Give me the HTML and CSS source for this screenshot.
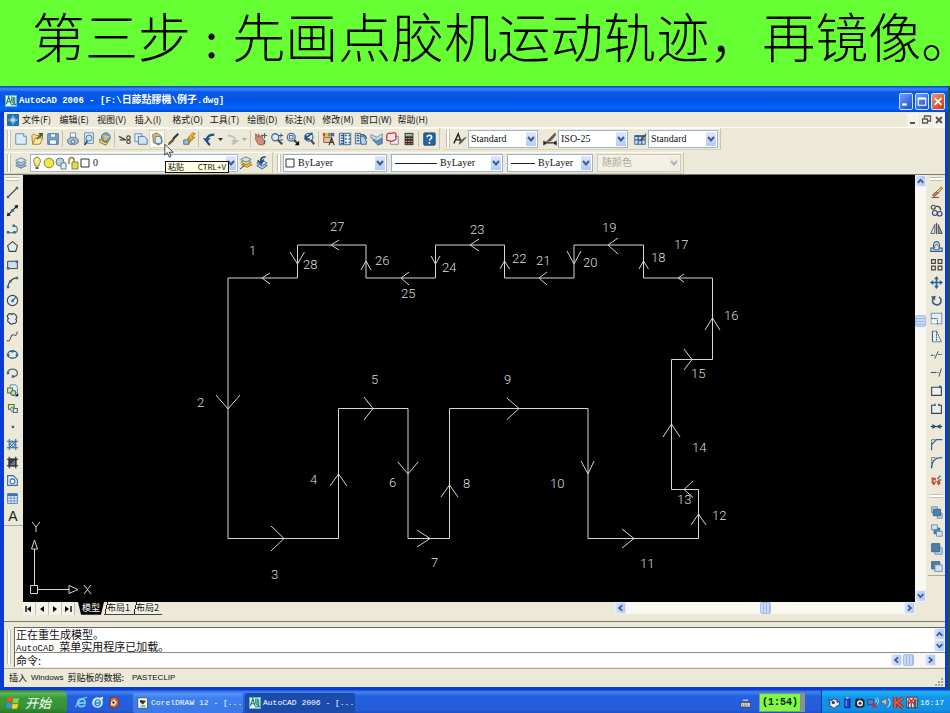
FILE: index.html
```html
<!DOCTYPE html>
<html lang="zh-CN">
<head>
<meta charset="utf-8">
<title>AutoCAD 2006</title>
<link rel="stylesheet" href="styles.css">
</head>
<body>
<svg class="defs" width="0" height="0" aria-hidden="true">
  <symbol id="chev-down" viewBox="0 0 10 10"><path d="M2 3l3 3.4L8 3" fill="none" stroke="#3f5a8c" stroke-width="2"/></symbol>
  <symbol id="chev-up" viewBox="0 0 10 10"><path d="M2 7l3-3.4L8 7" fill="none" stroke="#3f5a8c" stroke-width="2"/></symbol>
  <symbol id="chev-left" viewBox="0 0 10 10"><path d="M6.8 2L3.4 5l3.4 3" fill="none" stroke="#3f5a8c" stroke-width="2"/></symbol>
  <symbol id="chev-right" viewBox="0 0 10 10"><path d="M3.2 2l3.4 3-3.4 3" fill="none" stroke="#3f5a8c" stroke-width="2"/></symbol>
  <symbol id="acad" viewBox="0 0 16 16"><rect width="16" height="16" fill="#e9f6f4"/><path d="M.5.5h15v15H.5z" fill="none" stroke="#2f8f8a"/><path d="M2 12L5 2l3 10M3 9h4M9 2v6M11 2v7M13 3v8M9 8c0 3 5 3 5 5H8" fill="none" stroke="#0e7a72" stroke-width="1.4"/></symbol>
  <symbol id="page" viewBox="0 0 16 16"><path d="M2 2h9l3 3v9H2z" fill="#dcecf8" stroke="#5687b0"/><path d="M11 2v3h3" fill="#fff" stroke="#5687b0"/></symbol>
  <symbol id="layers" viewBox="0 0 16 16"><path d="M2 11l6-3 6 3-6 3z" fill="#9db6cc" stroke="#5c7c9c"/><path d="M2 8l6-3 6 3-6 3z" fill="#b9cde0" stroke="#5c7c9c"/><path d="M2 5l6-3 6 3-6 3z" fill="#d5e3ef" stroke="#5c7c9c"/></symbol>
</svg>

<header class="banner"><h1>第三步 : 先画点胶机运动轨迹，再镜像<span>。</span></h1></header>

<section class="window">
  <div class="titlebar">
    <svg class="ic12"><use href="#acad"/></svg>
    <h2>AutoCAD 2006 - [F:\<span>日藤點膠機</span>\<span>例子</span>.dwg]</h2>
    <button class="wbtn" aria-label="最小化"><svg viewBox="0 0 16 16"><path d="M3 12h6" stroke="#fff" stroke-width="3"/></svg></button>
    <button class="wbtn" aria-label="最大化"><svg viewBox="0 0 16 16"><path d="M3 4h10v9H3z" fill="none" stroke="#fff" stroke-width="1.5"/><path d="M3 4h10" stroke="#fff" stroke-width="3"/></svg></button>
    <button class="wbtn close" aria-label="关闭"><svg viewBox="0 0 16 16"><path d="M3.500 3.500l9 9M12.500 3.500l-9 9" stroke="#fff" stroke-width="2.200"/></svg></button>
  </div>

  <div class="client">
    <nav class="menubar">
      <svg class="ic12" viewBox="0 0 16 16"><rect width="16" height="16" rx="1" fill="#2272a8"/><path d="M8 2v12M2 8h12M5 5l6 6M11 5l-6 6" stroke="#bfe6fa" stroke-width="1.4"/></svg>
      <div class="menus">
        <button>文件(F)</button><button>编辑(E)</button><button>视图(V)</button><button>插入(I)</button><button>格式(O)</button><button>工具(T)</button><button>绘图(D)</button><button>标注(N)</button><button>修改(M)</button><button>窗口(W)</button><button>帮助(H)</button>
      </div>
      <div class="mdi">
        <button aria-label="最小化文档"><svg viewBox="0 0 12 12"><path d="M3 9h5" stroke="#555" stroke-width="2"/></svg></button>
        <button aria-label="还原文档"><svg viewBox="0 0 12 12"><path d="M4.500 4V2h6v5H8M2.500 5h5v4h-5z" fill="none" stroke="#555" stroke-width="1.300"/></svg></button>
        <button aria-label="关闭文档"><svg viewBox="0 0 12 12"><path d="M3 3l6 6M9 3L3 9" stroke="#555" stroke-width="2"/></svg></button>
      </div>
    </nav>

    <div class="row">
      <div class="toolbar">
        <i class="grip"></i>
        <button class="tb" aria-label="新建"><svg><use href="#page"/></svg></button>
        <button class="tb" aria-label="打开"><svg viewBox="0 0 16 16"><path d="M2 4l3-2 2 2h5v9H3z" fill="#f4d58a" stroke="#a97c22"/><path d="M3 14l3-7h9l-4 7z" fill="#f9e6ae" stroke="#a97c22"/><path d="M8 8l6-6M10 2h4v4" stroke="#4a4a3c" stroke-width="1.500" fill="none"/></svg></button>
        <button class="tb" aria-label="保存"><svg viewBox="0 0 16 16"><path d="M2 2h12v12H2z" fill="#7fa9cf" stroke="#3d6a96"/><path d="M5 2h6v4H5zM4 9h8v5H4z" fill="#f4f9fd" stroke="#3d6a96" stroke-width=".8"/></svg></button>
        <i class="sep"></i>
        <button class="tb" aria-label="打印"><svg viewBox="0 0 16 16"><path d="M5 7V1h6v6" fill="#fff" stroke="#6c88a5"/><path d="M2 9l3-3h6l3 3v3l-3 2H4l-2-2z" fill="#a9bccd" stroke="#48647f"/><circle cx="8" cy="11" r="2" fill="#e7eef4" stroke="#48647f"/></svg></button>
        <button class="tb" aria-label="打印预览"><svg viewBox="0 0 16 16"><path d="M3 1h10v12H3z" fill="#e6eff8" stroke="#5c83aa"/><circle cx="8" cy="7" r="3.500" fill="#c6e2f6" stroke="#456b93"/><path d="M6 10l-3 5" stroke="#334d6b" stroke-width="2"/></svg></button>
        <button class="tb" aria-label="发布"><svg viewBox="0 0 16 16"><circle cx="9" cy="6" r="5" fill="#78a7cf" stroke="#3b6791"/><path d="M6 4l4 2 3-1M7 9l3-3" stroke="#eec94e" stroke-width="2" fill="none"/><path d="M2 8l6 4 4-1-3 4-7-3z" fill="#f2d372" stroke="#8d6e20"/></svg></button>
        <i class="sep"></i>
        <button class="tb" aria-label="剪切"><svg viewBox="0 0 16 16"><path d="M1 5l8 4M2 9h7" stroke="#444" stroke-width="1.400"/><circle cx="12" cy="6.500" r="2" fill="none" stroke="#444" stroke-width="1.300"/><circle cx="12" cy="11" r="2" fill="none" stroke="#444" stroke-width="1.300"/></svg></button>
        <button class="tb" aria-label="复制"><svg viewBox="0 0 16 16"><path d="M1 2h8v9H1z" fill="#e3eff9" stroke="#5383b1"/><path d="M5 5h7l3 3v6H5z" fill="#cfe3f5" stroke="#3f73a5"/></svg></button>
        <button class="tb hot" aria-label="粘贴"><svg viewBox="0 0 16 16"><path d="M3 3l5-2 5 4 1 7-4 3-6-3z" fill="#dac173" stroke="#7a6a35"/><path d="M6 5h5l2 3v5H6z" fill="#dcebf7" stroke="#4978a5"/></svg>
          <span class="cursor"><svg viewBox="0 0 12 18"><path d="M1 1v13l3-3 2.500 5.500 2-1L6.200 10.500H11z" fill="#fff" stroke="#222"/></svg></span>
          <span class="tip" role="tooltip"><span>粘贴</span><span>CTRL+V</span></span></button>
        <button class="tb" aria-label="特性匹配"><svg viewBox="0 0 16 16"><path d="M14 2L8 8" stroke="#333" stroke-width="2.500"/><path d="M8 7l2 2-5 5-3 1 1-3z" fill="#6b5648"/></svg></button>
        <button class="tb" aria-label="块编辑器"><svg viewBox="0 0 16 16"><path d="M2 9h6v5H2z" fill="#9dc2e2" stroke="#3d6c98"/><path d="M12 1L6 8h4L7 13l8-7h-4l4-4z" fill="#f2b93b" stroke="#a66c12"/></svg></button>
        <i class="sep"></i>
        <button class="tb" aria-label="放弃"><svg viewBox="0 0 16 16"><path d="M9 15C3 10 5 3 14 3" fill="none" stroke="#1f4f8c" stroke-width="2.500"/><path d="M1 7l9 0-5 5z" fill="#1f4f8c"/></svg></button>
        <button class="dd" aria-label="放弃列表"><svg viewBox="0 0 8 8"><path d="M1 3h5L3.500 6z" fill="#333"/></svg></button>
        <button class="tb" aria-label="重做"><svg viewBox="0 0 16 16"><path d="M7 14c6-3 4-10-5-10" fill="none" stroke="#b9bdbd" stroke-width="2"/><path d="M6 9h9l-5 5z" fill="#b9bdbd"/></svg></button>
        <button class="dd" aria-label="重做列表"><svg viewBox="0 0 8 8"><path d="M1 3h5L3.500 6z" fill="#aaa"/></svg></button>
        <i class="sep"></i>
        <button class="tb" aria-label="实时平移"><svg viewBox="0 0 16 16"><path d="M2 2l3 4 0-4 2 4 2-3 1 5 3 2-3 5-5-1-3-5z" fill="#d58d7d" stroke="#99564b"/><path d="M12 1v6M9 4h6M12 10v4" stroke="#3e5f8c" stroke-width="1.300"/></svg></button>
        <button class="tb" aria-label="实时缩放"><svg viewBox="0 0 16 16"><circle cx="6" cy="6" r="4" fill="#d9ebf7" stroke="#536f8b" stroke-width="1.500"/><path d="M9 9l5 5" stroke="#534a42" stroke-width="2.500"/><path d="M10 4h5M12.500 1.500v5M11 9h4" stroke="#234d82"/></svg></button>
        <button class="tb" aria-label="窗口缩放"><svg viewBox="0 0 16 16"><circle cx="6" cy="6" r="4.500" fill="#d9ebf7" stroke="#536f8b" stroke-width="1.500"/><path d="M4 4h4v4H4z" fill="none" stroke="#2a659f"/><path d="M9 9l4 4" stroke="#534a42" stroke-width="2.500"/><path d="M15 10v5h-5z"/></svg></button>
        <button class="tb" aria-label="缩放上一个"><svg viewBox="0 0 16 16"><circle cx="8" cy="6" r="4.500" fill="#d9ebf7" stroke="#536f8b" stroke-width="1.500"/><path d="M12 1L4 7M4 3v5h5" stroke="#1f4f8c" stroke-width="2" fill="none"/><path d="M10 9l4 5" stroke="#534a42" stroke-width="2.500"/></svg></button>
        <i class="sep"></i>
        <button class="tb" aria-label="特性"><svg viewBox="0 0 16 16"><path d="M1 1h3v4H1z" fill="#e33"/><path d="M4 1h3v4H4z" fill="#e8c52c"/><path d="M7 1h3v4H7z" fill="#3aa655"/><path d="M10 1h4v4h-4z" fill="#8a3fc0"/><path d="M2 6h9v6H2z" fill="#e0c2a8" stroke="#80513a"/><path d="M8 15l3-8 3 8M9 12h4" fill="none" stroke="#333" stroke-width="1.300"/></svg></button>
        <button class="tb" aria-label="设计中心"><svg viewBox="0 0 16 16"><path d="M1.500 1.500h13v13h-13z" fill="#e9f1f8" stroke="#345b82"/><path d="M3 4h3M3 7h3M3 10h3M3 13h3M6.500 2v12M8 4h2M12 4h2M8 8h2M12 8h2M8 12h2M12 12h2" stroke="#2e5c8d" stroke-width="1.500"/></svg></button>
        <button class="tb" aria-label="工具选项板"><svg viewBox="0 0 16 16"><path d="M1.500 1.500h6v12h-6z" fill="#dfeaf4" stroke="#345b82"/><path d="M3 4h3M3 7h3M3 10h3" stroke="#2e5c8d" stroke-width="1.500"/><path d="M7 5h4l3 5v4H8z" fill="#b9d1e6" stroke="#345b82"/><path d="M8 3c4 0 6 1 6 5" fill="none" stroke="#1f4f8c" stroke-width="1.500"/></svg></button>
        <button class="tb" aria-label="图纸集"><svg viewBox="0 0 16 16"><path d="M1 3l7 3 6-4v4l-5 4-8-3z" fill="#c6d9e8" stroke="#6a8ba9"/><path d="M3 9l5 2 6-4v6l-5 2z" fill="#5f92bb" stroke="#486c8c"/></svg></button>
        <button class="tb" aria-label="标记集"><svg viewBox="0 0 16 16"><path d="M5 5h9v9H5z" fill="#eef2f6" stroke="#777"/><path d="M2 2c2-2 4 1 6-1 3-1 4 2 3 4 1 3 0 5-3 5-2 2-4-1-6 0-2-1-1-3-1-4s-1-3 1-4z" fill="#fbe9e7" stroke="#d1343b" stroke-width="1.500"/></svg></button>
        <button class="tb" aria-label="计算器"><svg viewBox="0 0 16 16"><path d="M3 1h10v14H3z" fill="#3b2626"/><path d="M4 2h8v3H4z" fill="#8fc493"/><path d="M5 7v1M8 7v1M11 7v1M5 10v1M8 10v1M11 10v1M5 13v1M8 13v1M11 13v1" stroke="#e9c7c0" stroke-width="2"/></svg></button>
        <i class="sep"></i>
        <button class="tb" aria-label="帮助"><svg viewBox="0 0 16 16"><rect x="2" y="1" width="13" height="14" rx="1" fill="#28649c" stroke="#174572"/><path d="M6 6c0-3 5-3 5 0 0 2-2.500 2-2.500 4M8.500 11.500v2" fill="none" stroke="#fff" stroke-width="1.800"/></svg></button>
      </div>
      <div class="toolbar styles">
        <i class="grip"></i>
        <button class="tb" aria-label="文字样式"><svg viewBox="0 0 16 16"><path d="M1 13L6 2l3 9M3 9h5" fill="none" stroke="#222" stroke-width="1.600"/><path d="M15 6l-5 6-3 2 1-4z" fill="#7b6657" stroke="#333" stroke-width=".6"/></svg></button>
        <label class="combo w70"><select aria-label="文字样式"><option>Standard</option></select><span class="arr"><svg><use href="#chev-down"/></svg></span></label>
        <button class="tb gap" aria-label="标注样式"><svg viewBox="0 0 16 16"><path d="M1 10v5M15 10v5M1 12.500h14M3 11l-2 1.500L3 14M13 11l2 1.500-2 1.500" stroke="#222" fill="none" stroke-width="1.300"/><path d="M14 1L7 8l-3 3 5-1 5-6z" fill="#6d5c50" stroke="#333" stroke-width=".6"/></svg></button>
        <label class="combo w70"><select aria-label="标注样式"><option>ISO-25</option></select><span class="arr"><svg><use href="#chev-down"/></svg></span></label>
        <button class="tb gap" aria-label="表格样式"><svg viewBox="0 0 16 16"><path d="M2 4h12v10H2z" fill="#cfe1f3" stroke="#2f64a0"/><path d="M2 5h12M6 4v10M10 4v10M2 9h12" stroke="#2f64a0" stroke-width="1.400"/><path d="M15 1L9 8l-3 3 4-1 5-6z" fill="#5b4c42"/></svg></button>
        <label class="combo w70"><select aria-label="表格样式"><option>Standard</option></select><span class="arr"><svg><use href="#chev-down"/></svg></span></label>
      </div>
    </div>

    <div class="row">
      <div class="toolbar">
        <i class="grip"></i>
        <button class="tb" aria-label="图层特性"><svg><use href="#layers"/></svg></button>
        <label class="combo layer">
          <svg viewBox="0 0 12 14"><path d="M6 1a4 4 0 0 1 2 7v2H4V8a4 4 0 0 1 2-7z" fill="#f9ee8c" stroke="#8d8434"/><path d="M4.500 12h3" stroke="#555" stroke-width="2"/></svg>
          <svg viewBox="0 0 12 14"><circle cx="6" cy="7" r="4.800" fill="#f0e94a" stroke="#8c8826"/></svg>
          <svg viewBox="0 0 12 14"><circle cx="5" cy="6" r="4" fill="#b9d2dc" stroke="#5d818f"/><path d="M6 7h5v6H6z" fill="#e8eef2" stroke="#6a7f8b"/></svg>
          <svg viewBox="0 0 12 14"><path d="M2 8V4a2.500 2.500 0 0 1 5 0v2" fill="none" stroke="#8b8527" stroke-width="1.500"/><path d="M5 6h6v7H5z" fill="#e6dc50" stroke="#8b8527"/></svg>
          <svg viewBox="0 0 12 14"><path d="M2 3h8v8H2z" fill="#fff" stroke="#333"/></svg>
          <select aria-label="图层"><option>0</option></select><span class="arr"><svg><use href="#chev-down"/></svg></span></label>
        <button class="tb" aria-label="置为当前"><svg viewBox="0 0 16 16"><path d="M3 10l6-3 6 3-6 3z" fill="#e2c555" stroke="#967a1c"/><path d="M2 7l6-3 6 3-6 3z" fill="#f0dc85" stroke="#967a1c"/><path d="M2 4l6-3 6 3-6 3z" fill="#d5e3ef" stroke="#5c7c9c"/><path d="M1 15l5-4" stroke="#222"/></svg></button>
        <button class="tb" aria-label="上一图层"><svg viewBox="0 0 16 16"><path d="M2 11l6-3 6 3-6 4z" fill="#a9c2d8" stroke="#44678a"/><path d="M2 8l6-3 6 3-6 3z" fill="#dce8f2" stroke="#44678a"/><path d="M12 1C8 1 6 3 7 7M3 5l4 4 3-5" fill="none" stroke="#1f4f8c" stroke-width="2"/></svg></button>
      </div>
      <div class="toolbar props">
        <i class="grip"></i>
        <label class="combo color"><svg viewBox="0 0 12 14"><path d="M2 3h8v8H2z" fill="#fff" stroke="#333"/></svg><select aria-label="颜色"><option>ByLayer</option></select><span class="arr"><svg><use href="#chev-down"/></svg></span></label>
        <label class="combo ltype"><i class="sample"></i><select aria-label="线型"><option>ByLayer</option></select><span class="arr"><svg><use href="#chev-down"/></svg></span></label>
        <label class="combo lweight"><i class="sample short"></i><select aria-label="线宽"><option>ByLayer</option></select><span class="arr"><svg><use href="#chev-down"/></svg></span></label>
        <label class="combo off"><select aria-label="打印样式" disabled><option>随颜色</option></select><span class="arr"><svg><use href="#chev-down"/></svg></span></label>
      </div>
    </div>

    <main class="work">
      <aside class="side left">
        <i class="hgrip"></i>
        <button aria-label="直线"><svg viewBox="0 0 16 16"><path d="M2.500 13.500l11-11" stroke="#333" stroke-width="1.300"/><path d="M1 12h3v3H1zM12 1h3v3h-3z" fill="#2c6ca8"/></svg></button>
        <button aria-label="构造线"><svg viewBox="0 0 16 16"><path d="M2 14L14 2" stroke="#222" stroke-width="1.500"/><path d="M1 15l1-5 4 4zM15 1l-5 1 4 4z" fill="#222"/><path d="M6 6.500h4v3H6z" fill="#2c6ca8"/></svg></button>
        <button aria-label="多段线"><svg viewBox="0 0 16 16"><path d="M2 13h9c4 0 4-8 0-8H9" fill="none" stroke="#5a7ea3" stroke-width="1.500"/><path d="M1 11h3v3H1zM9 11h3v3H9zM8 3h3v3H8z" fill="#2c6ca8"/></svg></button>
        <button aria-label="正多边形"><svg viewBox="0 0 16 16"><path d="M8 2l6 5-2 7H4L2 7z" fill="#e3edf8" stroke="#444" stroke-width="1.400"/></svg></button>
        <button aria-label="矩形"><svg viewBox="0 0 16 16"><path d="M2 4h12v9H2z" fill="#cddff1" stroke="#444" stroke-width="1.200"/><path d="M1 11h3v3H1zM12 3h3v3h-3z" fill="#2c6ca8"/></svg></button>
        <button aria-label="圆弧"><svg viewBox="0 0 16 16"><path d="M2 14C3 7 7 3 14 2" fill="none" stroke="#444" stroke-width="1.300"/><path d="M1 12h3v3H1zM4 5h3v3H4zM12 1h3v3h-3z" fill="#2c6ca8"/></svg></button>
        <button aria-label="圆"><svg viewBox="0 0 16 16"><circle cx="8" cy="8" r="6.300" fill="#e3edf8" stroke="#444" stroke-width="1.400"/><path d="M8 8l4-4" stroke="#2c6ca8" stroke-width="1.500"/><circle cx="8" cy="8.500" r="1.600" fill="#2c6ca8"/></svg></button>
        <button aria-label="修订云线"><svg viewBox="0 0 16 16"><path d="M7 3a3 3 0 0 1 5 1 3 3 0 0 1 0 5 3 3 0 0 1-3 5 3 3 0 0 1-5-1 3 3 0 0 1-1-5 3 3 0 0 1 4-5z" fill="#e3edf8" stroke="#444" stroke-width="1.400"/></svg></button>
        <button aria-label="样条曲线"><svg viewBox="0 0 16 16"><path d="M1 13c5 3 4-6 7-7s4 4 6-4" fill="none" stroke="#555" stroke-width="1.300"/></svg></button>
        <button aria-label="椭圆"><svg viewBox="0 0 16 16"><ellipse cx="8" cy="8" rx="6" ry="4.500" fill="#e3edf8" stroke="#345" stroke-width="1.400"/><path d="M1 7h3v3H1zM12 7h3v3h-3zM6.500 2.500h3v3h-3z" fill="#2c6ca8"/></svg></button>
        <button aria-label="椭圆弧"><svg viewBox="0 0 16 16"><path d="M2 9c0-7 12-7 12 0 0 3-3 4-6 4" fill="none" stroke="#567" stroke-width="1.600"/><path d="M1 7h3v3H1zM7 11.500h3v3H7z" fill="#2c6ca8"/></svg></button>
        <button aria-label="插入块"><svg viewBox="0 0 16 16"><path d="M5 1h7l2 3v7H5z" fill="#e6f0fa" stroke="#4478a8"/><path d="M2 5h6v6H2z" fill="#f0e79b" stroke="#4d6f56" stroke-width="1.300"/><circle cx="9" cy="11" r="3" fill="#c7dcb0" stroke="#3c6d78" stroke-width="1.300"/><path d="M15 11v4h-4z"/></svg></button>
        <button aria-label="创建块"><svg viewBox="0 0 16 16"><path d="M3 3h7v6H3z" fill="#f0e79b" stroke="#4d6f56" stroke-width="1.300"/><circle cx="8" cy="9" r="2.500" fill="#d6e7c0" stroke="#3c6d78"/><path d="M9 8h5v5H9z" fill="#dce9f5" stroke="#3c6d98" stroke-width="1.300"/></svg></button>
        <button aria-label="点"><svg viewBox="0 0 16 16"><path d="M7 7h3v3H7z" fill="#2c6ca8"/></svg></button>
        <button aria-label="图案填充"><svg viewBox="0 0 16 16"><path d="M3 3h10v10H3z" fill="#c9e2f1"/><path d="M4 1v14M12 1v14M1 4h14M1 12h14M4 12l8-8M4 8l4-4M8 12l4-4M4 6l6 6M7 4l5 5" stroke="#2d6b97" stroke-width="1.200"/></svg></button>
        <button aria-label="渐变色"><svg viewBox="0 0 16 16"><path d="M3 3h10v10H3z" fill="#3d4048"/><path d="M4 12l8-8v8z" fill="#777b80"/><path d="M4 1v14M12 1v14M1 4h14M1 12h14" stroke="#23303e" stroke-width="1.400"/></svg></button>
        <button aria-label="面域"><svg viewBox="0 0 16 16"><path d="M2 2h7l5 5v7H2z" fill="#d9e8f6" stroke="#3b6b9c" stroke-width="1.300"/><circle cx="8" cy="9" r="3" fill="#fff" stroke="#3b6b9c" stroke-width="1.300"/></svg></button>
        <button aria-label="表格"><svg viewBox="0 0 16 16"><path d="M2 2h12v12H2z" fill="#eaf2fb" stroke="#3d6fae"/><path d="M2 3.500h12" stroke="#3d6fae" stroke-width="3"/><path d="M6 3v11M10 3v11M2 7.500h12M2 11h12" stroke="#5b87bd"/></svg></button>
        <button class="mtext" aria-label="多行文字">A</button>
      </aside>

      <svg class="canvas" viewBox="23 175 892 427" role="img" aria-label="点胶轨迹图">
        <g class="ln">
          <path d="M228 278H297.500V245H366V278H435.500V245H504.500V278H574V245H643.500V278H712.500V359.500H671.500V489.500H698.500V538.500H588V408.500H449.500V538.500H408V408.500H338.500V538.500H228Z"/>
          <path d="M270 273l-8 5 8 6M290 252l7.500 12 7-12M339 240l-8 5 8 5M361 270l5-9 5 9M409 272l-8 6 8 7M431 256l4.500 8 4.500-8M479 239l-9 6 9 6M500 269l4.500-8 5 8M547 272l-8 6 8 7M567 251l7 13 7-13M618 238l-10 7 10 9M639 269l4.500-8 5 8M684 274l-6 4 6 4M705 330l7.500-12 7.500 12M684 349l8 10.500-8 10.500M663 437l8.500-13 8.500 13M693 481l-9 8.500 9 8M691 525l7.500-11 7.500 11M622 529l12 9.500-12 9.500M581 461l7 13 6-13M507 398l12 10.500-12 11M441 497l8.500-12 8.500 12M417 530l13 8.500-13 8.500M398 462l10 12 10-12M364 397l9 11.500-9 11.500M330 486l8.500-12 8.500 12M271 526l13 12.500-13 12.500M216 395l12 14 12-14"/>
          <path d="M30.500 585.500h7v8h-7zM34.500 585V549M31.500 549l3-9 3 9zM38 589.500H69M69 585.500l9 4-9 4z"/>
          <path d="M32 522l4 5 4-5M36 527v5M84 585l7 9M91 585l-7 9"/>
        </g>
        <g class="nums">
          <text x="249" y="255">1</text><text x="197" y="407">2</text><text x="271" y="579">3</text><text x="310" y="484">4</text><text x="371" y="384">5</text><text x="389" y="487">6</text><text x="431" y="567">7</text><text x="463" y="488">8</text><text x="504" y="384">9</text><text x="550" y="488">10</text><text x="640" y="568">11</text><text x="712" y="520">12</text><text x="677" y="504">13</text><text x="692" y="452">14</text><text x="691" y="378">15</text><text x="724" y="320">16</text><text x="674" y="249">17</text><text x="651" y="262">18</text><text x="602" y="232">19</text><text x="583" y="267">20</text><text x="536" y="265">21</text><text x="512" y="263">22</text><text x="470" y="234">23</text><text x="442" y="272">24</text><text x="401" y="298">25</text><text x="375" y="265">26</text><text x="330" y="231">27</text><text x="303" y="269">28</text>
        </g>
      </svg>

      <div class="vscroll">
        <button class="sb" aria-label="向上滚动"><svg><use href="#chev-up"/></svg></button>
        <i class="thumb"></i>
        <button class="sb" aria-label="向下滚动"><svg><use href="#chev-down"/></svg></button>
      </div>

      <aside class="side right">
        <i class="hgrip"></i>
        <button aria-label="删除"><svg viewBox="0 0 16 16"><path d="M2 14h9" stroke="#333"/><path d="M14 1L8 7l2 2 5-6z" fill="#f2ce69" stroke="#7a5d2c"/><path d="M8 7L3 11l2 2 5-4z" fill="#d97c62" stroke="#7b3d2d"/></svg></button>
        <button aria-label="复制对象"><svg viewBox="0 0 16 16"><circle cx="4" cy="4" r="2.500" fill="none" stroke="#444" stroke-width="1.400"/><circle cx="6" cy="11" r="3" fill="none" stroke="#446" stroke-width="1.400"/><circle cx="12" cy="12" r="2.800" fill="#dce8f4" stroke="#446" stroke-width="1.400"/><path d="M7 3c5-1 6 2 6 5" fill="none" stroke="#246" stroke-width="1.500"/></svg></button>
        <button aria-label="镜像"><svg viewBox="0 0 16 16"><path d="M6 3v11H1z" fill="#dbe6f0" stroke="#444"/><path d="M10 3v11h5z" fill="#8199b0" stroke="#444"/><path d="M8 1v14" stroke="#236"/></svg></button>
        <button aria-label="偏移"><svg viewBox="0 0 16 16"><path d="M1 14h14v-4h-4c2-4 0-8-3-8S3 6 5 10H1z" fill="#dbe9f6" stroke="#2d5f93" stroke-width="1.300"/><path d="M4 12h8M6 10C4 6 10 3 10 8" fill="none" stroke="#444"/></svg></button>
        <button aria-label="阵列"><svg viewBox="0 0 16 16"><path d="M2 2h4.500v4.500H2zM10 2h4.500v4.500H10zM2 10h4.500v4.500H2zM10 10h4.500v4.500H10z" fill="#f3f1e6" stroke="#444" stroke-width="1.500"/></svg></button>
        <button aria-label="移动"><svg viewBox="0 0 16 16"><path d="M8 3v10M3 8h10" stroke="#2d639c" stroke-width="2"/><path d="M8 0l3 4H5zM8 16l3-4H5zM0 8l4-3v6zM16 8l-4-3v6z" fill="#2d639c"/></svg></button>
        <button aria-label="旋转"><svg viewBox="0 0 16 16"><path d="M5 4a5.300 5.300 0 1 0 6-.5" fill="none" stroke="#3d5f84" stroke-width="2"/><path d="M1 3l6-1-1 6z" fill="#3d5f84"/></svg></button>
        <button aria-label="缩放"><svg viewBox="0 0 16 16"><path d="M1.500 1.500h13v13h-13z" fill="#e2edf7" stroke="#5a83ac"/><path d="M2 8h7v7" fill="none" stroke="#234" stroke-dasharray="2 1"/><path d="M2 9h6v5H2z" fill="#f7f4e8"/></svg></button>
        <button aria-label="拉伸"><svg viewBox="0 0 16 16"><path d="M3 1.500h5l6 13H3z" fill="#e2edf7" stroke="#4a6a8a"/><path d="M3 2v12M8 2v12" stroke="#333" stroke-dasharray="2 1"/></svg></button>
        <button aria-label="修剪"><svg viewBox="0 0 16 16"><path d="M1 9h5M10 8h5" stroke="#2d639c" stroke-width="1.500" stroke-dasharray="3 1"/><path d="M6 13l4-9" stroke="#333"/></svg></button>
        <button aria-label="延伸"><svg viewBox="0 0 16 16"><path d="M1 8h7" stroke="#2d639c" stroke-width="1.400"/><path d="M9 8h2" stroke="#2d639c"/><path d="M11 13l3-10" stroke="#333"/></svg></button>
        <button aria-label="打断于点"><svg viewBox="0 0 16 16"><path d="M2 4h12v10H2z" fill="#e7eef4" stroke="#444" stroke-width="1.400"/><path d="M11 2h3v3h-3z" fill="#2d639c"/></svg></button>
        <button aria-label="打断"><svg viewBox="0 0 16 16"><path d="M6 4H2v10h12V4h-4" fill="#e7eef4" stroke="#444" stroke-width="1.400"/><path d="M5 2h2v3H5zM10 2h2v3h-2z" fill="#2d639c"/></svg></button>
        <button aria-label="合并"><svg viewBox="0 0 16 16"><path d="M1 8h14" stroke="#234" stroke-width="1.500"/><path d="M3 5l5 3-5 3zM13 5L8 8l5 3z" fill="#234d76"/></svg></button>
        <button aria-label="倒角"><svg viewBox="0 0 16 16"><path d="M2 15V8l6-6h7" fill="none" stroke="#2d639c" stroke-width="1.500"/><path d="M2 7V2h5" fill="none" stroke="#333" stroke-dasharray="2 1"/></svg></button>
        <button aria-label="圆角"><svg viewBox="0 0 16 16"><path d="M2 15C2 6 6 2 15 2" fill="none" stroke="#2d639c" stroke-width="1.800"/><path d="M2 9V2h6" fill="none" stroke="#333" stroke-dasharray="2 1"/></svg></button>
        <button aria-label="分解"><svg viewBox="0 0 16 16"><path d="M2 4l5 1 1 4-3 5-3-3zM8 9l4-1 1 4-3 2z" fill="#c64b38"/><path d="M9 6l4-4M10 8l4-1" stroke="#6b7fa0" stroke-width="2"/><path d="M4 7h3v3H4z" fill="#f0bf45"/></svg></button>
        <i class="hgrip"></i>
        <button aria-label="前置"><svg viewBox="0 0 16 16"><path d="M2 1h7v7H2zM9 9h6v6H9z" fill="#c7d9ea" stroke="#5682ac"/><path d="M4 4h9v8H4z" fill="#4f7ea9" stroke="#2f5d87"/></svg></button>
        <button aria-label="后置"><svg viewBox="0 0 16 16"><path d="M5 5h7v7H5z" fill="#4f7ea9" stroke="#2f5d87"/><path d="M2 1h7v6H2zM8 9h7v6H8z" fill="#d4e2ef" stroke="#5682ac"/></svg></button>
        <button aria-label="置于对象之上"><svg viewBox="0 0 16 16"><path d="M6 7h9v8H6z" fill="#c7d9ea" stroke="#5682ac"/><path d="M2 2h10v10H2z" fill="#4f7ea9" stroke="#2f5d87"/></svg></button>
        <button aria-label="置于对象之下"><svg viewBox="0 0 16 16"><path d="M2 2h10v9H2z" fill="#4f7ea9" stroke="#2f5d87"/><path d="M6 6h9v8H6z" fill="#d4e2ef" stroke="#5682ac"/></svg></button>
      </aside>
    </main>

    <div class="tabs">
      <div class="tabnav">
        <button aria-label="第一个"><svg viewBox="0 0 12 12"><path d="M3 3v6" stroke="#111" stroke-width="1.500"/><path d="M8 3v6L4 6z"/></svg></button>
        <button aria-label="上一个"><svg viewBox="0 0 12 12"><path d="M8 3v6L4 6z"/></svg></button>
        <button aria-label="下一个"><svg viewBox="0 0 12 12"><path d="M4 3v6l4-3z"/></svg></button>
        <button aria-label="最后一个"><svg viewBox="0 0 12 12"><path d="M3 3v6l4-3z"/><path d="M9 3v6" stroke="#111" stroke-width="1.500"/></svg></button>
      </div>
      <button class="tab on">模型</button><button class="tab">布局1</button><button class="tab">布局2</button>
      <div class="hscroll">
        <button class="sb" aria-label="向左滚动"><svg><use href="#chev-left"/></svg></button>
        <i class="thumb"></i>
        <button class="sb" aria-label="向右滚动"><svg><use href="#chev-right"/></svg></button>
      </div>
    </div>

    <section class="command">
      <i class="grip"></i>
      <div class="console">
        <div class="history">
          <div class="log"><p>正在重生成模型。</p><p><span class="en">AutoCAD </span>菜单实用程序已加载。</p></div>
          <div class="vs"><button class="sb" aria-label="上滚"><svg><use href="#chev-up"/></svg></button><button class="sb" aria-label="下滚"><svg><use href="#chev-down"/></svg></button></div>
        </div>
        <div class="prompt">
          <label for="cmd">命令:</label><input id="cmd" type="text">
          <div class="hs"><button class="sb" aria-label="左滚"><svg><use href="#chev-left"/></svg></button><i class="thumb"></i><button class="sb" aria-label="右滚"><svg><use href="#chev-right"/></svg></button></div>
        </div>
      </div>
    </section>

    <footer class="status"><span>插入</span><span class="en">Windows</span><span>剪贴板的数据:</span><span class="en cmdname">PASTECLIP</span>
      <svg class="size" viewBox="0 0 10 10"><path d="M8 1v2M8 4v2M8 7v2M5 4v2M5 7v2M2 7v2" stroke="#aaa68f" stroke-width="2"/></svg></footer>
  </div>
</section>

<div class="taskbar">
  <button class="start"><svg viewBox="0 0 16 16"><path d="M2 3c2-1 3-1 5 0L6 8c-2-1-3-1-5 0z" fill="#f0562b"/><path d="M8 3c2 1 3 1 6 0l-1 5c-2 1-4 1-6 0z" fill="#8ed13c"/><path d="M1 9c2-1 3-1 5 0l-1 5c-2-1-3-1-5 0z" fill="#3d8df5"/><path d="M7 9c2 1 4 1 6 0l-1 5c-2 1-4 1-6 0z" fill="#fcd02c"/></svg>开始</button>
  <div class="quick">
    <button aria-label="Internet Explorer"><svg viewBox="0 0 16 16"><path d="M4 8.500h8.500c0-7-9-6-9 0 0 5 7 6 9 2" fill="none" stroke="#6cc5ff" stroke-width="2.400"/><path d="M1 14C0 10 9 1 15 2" fill="none" stroke="#bfe7ff"/></svg></button>
    <button aria-label="浏览器"><svg viewBox="0 0 16 16"><circle cx="8" cy="8" r="6.500" fill="#d9eefb"/><path d="M5 8.500h6.500c0-5-6.500-5-6.500 0s5 4 6.500 1.500" fill="none" stroke="#2a87c8" stroke-width="1.800"/><path d="M11 2l4-1-1 4z" fill="#fff"/></svg></button>
    <button aria-label="工具"><svg viewBox="0 0 16 16"><path d="M4 2l6-1 4 4v7l-5 3-6-2 1-5z" fill="#d06a35" stroke="#792c12"/><path d="M5 7l4-3 3 4-3 4-4-1z" fill="#f7e9d6"/><circle cx="8" cy="8" r="1.500" fill="#522"/></svg></button>
  </div>
  <button class="task"><svg viewBox="0 0 16 16"><path d="M1 1h13v14H1z" fill="#f3f6f4" stroke="#444"/><path d="M4 4l8 1-4 5-4-3z" fill="#333"/><path d="M5 12h6" stroke="#5a9" stroke-width="2"/></svg>CorelDRAW 12 - [...</button>
  <button class="task on"><svg><use href="#acad"/></svg>AutoCAD 2006 - [...</button>
  <svg class="ime" viewBox="0 0 16 16"><path d="M1 7h14v7H1z" fill="#e9e6dc" stroke="#222"/><path d="M3 9.500h10M3 12h10" stroke="#222" stroke-dasharray="1.500 1"/><path d="M4 4h8" stroke="#bcd" stroke-width="2"/></svg>
  <div class="battery"><span>(1:54)</span></div>
  <div class="tray">
    <svg viewBox="0 0 16 16"><path d="M1 4l4 2 2-3 5 2v3l3-2v6l-4 1-3 3-4-3-3-1 2-2z" fill="#e8eef2" stroke="#223"/><circle cx="7" cy="8" r="2" fill="#333"/></svg>
    <svg viewBox="0 0 16 16"><path d="M5 3h7v12H5z" fill="#1a3fc8" stroke="#0b1c70"/><path d="M7 1h3v2H7z" fill="#ddd"/><path d="M7 5v8" stroke="#7da2ff" stroke-width="1.500"/></svg>
    <svg viewBox="0 0 16 16"><path d="M2 4l3-2 2 2 3-2 4 3v8l-4 2H4l-3-3z" fill="#222"/><circle cx="8" cy="9" r="4" fill="#f2f2f2"/><circle cx="8" cy="9" r="2" fill="#333"/></svg>
    <svg viewBox="0 0 16 16"><path d="M1 4h8v7H1z" fill="#587db8" stroke="#203b75"/><path d="M11 3c2 2 2 4 0 6M13 1c3 3 3 7 0 10" fill="none" stroke="#d9e8ff"/><path d="M7 9l6 6M13 9l-6 6" stroke="#d5243a" stroke-width="2"/></svg>
    <svg viewBox="0 0 16 16"><path d="M2 5h3l4-3v11l-4-4H2z" fill="#b9c0c8" stroke="#555"/><path d="M11 3c4 3 3 8-1 11" fill="none" stroke="#dde" stroke-width="1.500"/></svg>
    <svg viewBox="0 0 16 16"><path d="M3 1v14M13 2L5 8l8 7" fill="none" stroke="#7a1212" stroke-width="4.500"/><path d="M3 1v14M13 2L5 8l8 7" fill="none" stroke="#f2552e" stroke-width="3"/></svg>
    <svg viewBox="0 0 16 16"><path d="M1 1h14v14H1z" fill="#f6efec" stroke="#222"/><path d="M3 5v10M7 8v7M11 4v11M13 3v12" stroke="#333" stroke-width="1.500"/><path d="M3 2l8 8M11 2l-8 8" stroke="#d8202a" stroke-width="2"/></svg>
    <time>16:17</time>
  </div>
</div>
</body>
</html>
```
FILE: styles.css
```css
* { box-sizing: border-box; }
:root {
  --face: #ece9d8;
  --line: #aca899;
  --cjk: "Noto Sans CJK SC", sans-serif;
  --latin: "Liberation Serif", "Noto Sans CJK SC", serif;
}
body {
  margin: 0;
  min-height: 100vh;
  display: flex;
  flex-direction: column;
  background: #1d5b2c;
  font: 9px/12px var(--cjk);
  color: #111;
}
button { padding: 0; border: 0; background: none; font: inherit; color: inherit; }
h1, h2, p { margin: 0; font-weight: normal; }
svg { display: block; }
.defs { position: absolute; }
i { display: block; flex: none; }

.banner { background: #66ff33; height: 86px; padding-left: 32px; overflow: hidden; }
.banner h1 {
  font: 300 53px/80px "Liberation Serif", "Noto Sans CJK SC", serif;
  color: #000;
  white-space: nowrap;
}
.banner h1 span { font-feature-settings: "halt"; }

.window {
  flex: 1;
  display: flex;
  flex-direction: column;
  margin-right: 2px;
  padding: 0 3px 3px 4px;
  background: #0a3ad8;
}
.titlebar {
  display: flex;
  align-items: center;
  gap: 2px;
  height: 26px;
  margin: 0 -3px 0 -4px;
  padding: 4px 3px 0 5px;
  background: linear-gradient(#0840c0 0, #3a8cf8 3px, #0a5ae8 6px, #0055e5 16px, #0066ff 22px, #0048d0 26px);
}
.ic12 { width: 12px; height: 12px; flex: none; }
.titlebar h2 {
  flex: 1;
  font: bold 9px/14px "Liberation Mono", "Noto Sans CJK SC", monospace;
  color: #fff;
  white-space: nowrap;
}
.titlebar h2 span { font-size: 10px; }
.wbtn {
  width: 14px;
  height: 17px;
  border: 1px solid #cfe0ff;
  border-radius: 2px;
  background: linear-gradient(135deg, #6f9cf5, #1c4fd0);
}
.wbtn svg { width: 12px; height: 15px; }
.wbtn.close { background: linear-gradient(135deg, #f0906c, #cc3b12); }

.client { flex: 1; background: var(--face); }
.menubar {
  display: flex;
  align-items: center;
  height: 16px;
  padding-left: 3px;
  border-bottom: 1px solid #fffef6;
}
.menus {
  display: grid;
  grid-template-columns: repeat(11, 1fr);
  width: 413px;
  margin-left: 3px;
}
.menus button { text-align: left; white-space: nowrap; }
.mdi { display: flex; gap: 1px; margin-left: auto; }
.mdi button { width: 12px; height: 14px; background: #f6f4ea; }
.mdi svg { width: 12px; height: 12px; }

.row { display: flex; height: 24px; }
.row + .row { height: 22px; }
.toolbar {
  display: flex;
  align-items: center;
  height: 22px;
  padding: 0 2px 0 3px;
  border-right: 1px solid #c9c5b2;
  border-bottom: 1px solid #d4d0bd;
  border-top: 1px solid #fbfaf3;
}
.grip {
  width: 4px;
  height: 18px;
  margin-right: 2px;
  border: solid #c5c1ad;
  border-width: 0 1px;
  background: #fff;
}
.tb { position: relative; width: 16px; height: 18px; flex: none; padding: 2px 1px; }
.tb svg { width: 14px; height: 14px; }
.tb.gap { margin-left: 4px; }
.tb.hot { background: #fbfaf4; outline: 1px solid #d9d5c4; outline-offset: -1px; }
.dd { width: 8px; height: 18px; }
.dd svg { width: 8px; height: 8px; }
.sep { width: 1px; height: 16px; margin: 0 2px 0 1px; background: #c5c1ad; }
.toolbar.styles { margin-left: 3px; }
.toolbar.props { margin-left: 1px; }

.cursor { position: absolute; left: 15px; top: 13px; z-index: 3; }
.cursor svg { width: 10px; height: 16px; }
.tip {
  position: absolute;
  left: 16px;
  top: 31px;
  z-index: 4;
  display: flex;
  justify-content: space-between;
  width: 64px;
  height: 12px;
  padding: 0 2px;
  border: 1px solid #111;
  background: #ffffe1;
  font-size: 8px;
  line-height: 10px;
  white-space: nowrap;
}

.combo {
  position: relative;
  display: flex;
  align-items: center;
  height: 18px;
  flex: none;
  border: 1px solid #9db4cf;
  background: #fff;
}
.combo > svg { width: 12px; height: 14px; flex: none; }
.combo select {
  flex: 1;
  min-width: 0;
  height: 16px;
  padding: 0 0 0 2px;
  border: 0;
  background: none;
  appearance: none;
  color: #111;
  font: 10px/16px var(--latin);
}
.arr {
  position: absolute;
  right: 1px;
  top: 1px;
  bottom: 1px;
  width: 10px;
  display: flex;
  align-items: center;
  background: linear-gradient(#dfe9ff, #b5caf6);
  pointer-events: none;
}
.arr svg { width: 10px; height: 10px; }
.w70 { width: 70px; }
.layer { width: 208px; margin-left: 1px; }
.color { width: 104px; }
.ltype { width: 112px; margin-left: 4px; }
.lweight { width: 86px; margin-left: 4px; }
.off { width: 84px; margin-left: 4px; background: #f3f1e6; border-color: #cfcbb8; }
.combo.off select { color: #aca899; opacity: 1; padding-left: 4px; }
.off .arr { background: #ebe8da; opacity: .4; }
.sample { width: 42px; height: 1px; margin: 0 1px 0 3px; background: #222; }
.sample.short { width: 24px; }

.work { display: flex; border-top: 1px solid #77756a; }
.side { display: flex; flex-direction: column; flex: none; }
.side button { width: 18px; height: 18px; padding: 2px; }
.side svg { width: 13px; height: 13px; }
.left { width: 19px; align-self: flex-start; border-bottom: 1px solid var(--line); }
.right { width: 17px; align-self: flex-start; margin-left: 2px; border-bottom: 1px solid var(--line); }
.hgrip {
  width: 13px;
  height: 4px;
  margin: 2px;
  border: solid #c5c1ad;
  border-width: 1px 0;
  background: #fff;
}
.right .hgrip ~ .hgrip { margin: 5px 2px; }
.side .mtext { font: 14px/14px "Liberation Sans", sans-serif; color: #222; }
.canvas { flex: 1; min-width: 0; height: auto; background: #000; }
.ln { fill: none; stroke: #d6d6d6; stroke-width: 1; }
.nums { fill: #dedede; font: 300 13px Roboto, sans-serif; }

.vscroll { display: flex; flex-direction: column; width: 11px; flex: none; background: #f8f7f1; }
.sb {
  display: block;
  width: 11px;
  height: 12px;
  flex: none;
  border: 1px solid #e6eeff;
  border-radius: 2px;
  background: linear-gradient(90deg, #d3e0fd, #b3c8f5);
}
.sb svg { width: 9px; height: 10px; }
.thumb {
  width: 11px;
  height: 12px;
  border: 1px solid #a9bfee;
  border-radius: 2px;
  background: repeating-linear-gradient(#c8d8fb 0 2px, #9fb8ea 2px 3px);
}
.vscroll .thumb { margin: 128px 0 auto; }

.tabs { display: flex; height: 17px; padding-left: 19px; }
.tabnav { display: flex; margin-right: 3px; }
.tabnav button { width: 13px; height: 13px; border-right: 1px solid #c5c1ad; background: #f5f3e9; }
.tabnav svg { width: 12px; height: 12px; }
.tab {
  width: 29px;
  height: 13px;
  line-height: 12px;
  background: linear-gradient(102deg, transparent 3px, #222 3px 4px, #f5f3e9 4px 25px, transparent 25px);
  border-bottom: 1px solid #444;
}
.tab.on { width: 26px; background: #000; color: #fff; clip-path: polygon(0 0, 100% 0, 88% 100%, 12% 100%); }
.hscroll { display: flex; justify-content: space-between; width: 300px; margin: 0 30px 0 auto; background: #f8f7f1; height: 12px; }

.command {
  display: flex;
  align-items: stretch;
  gap: 2px;
  margin-top: 2px;
  padding: 5px 0 1px 3px;
  border-top: 1px solid #77756a;
  border-bottom: 1px solid var(--line);
}
.command .grip { height: auto; margin: 3px 1px 3px 0; }
.console { flex: 1; border: solid #666; border-width: 1px 0 0 1px; background: #fff; font-size: 11px; line-height: 12px; }
.history { display: flex; border-bottom: 1px solid #8d8b80; }
.log { flex: 1; padding-left: 1px; }
.log p { height: 12px; }
.en { font-family: "Liberation Mono", monospace; font-size: 9px; line-height: 10px; white-space: pre; }
.prompt { display: flex; align-items: center; height: 14px; }
.prompt label { padding-left: 1px; }
.prompt input { flex: 1; height: 12px; padding: 0 2px; border: 0; outline: 0; background: none; font: inherit; }
.hs { display: flex; width: 54px; height: 14px; padding: 1px 9px 0 0; gap: 1px; background: #f8f7f1; }
.hs .sb:last-child { margin-left: auto; }
.hs .thumb, .hscroll .thumb { background: repeating-linear-gradient(90deg, #c8d8fb 0 2px, #9fb8ea 2px 3px); }

.status { display: flex; align-items: center; gap: 4px; height: 18px; padding: 0 1px 0 5px; }
.status span { font-size: 9px; }
.status .en { font: 8px/12px "Liberation Sans", sans-serif; }
.status .cmdname { margin-left: 4px; }
.size { width: 10px; height: 10px; margin-left: auto; align-self: flex-end; }

.taskbar {
  display: flex;
  align-items: center;
  height: 25px;
  background: linear-gradient(#1c4fc4 0, #3f86f2 2px, #2560de 6px, #245ddb 20px, #1c47a8);
  color: #fff;
}
.start {
  display: flex;
  align-items: center;
  gap: 4px;
  width: 67px;
  height: 25px;
  padding-left: 6px;
  border-radius: 0 6px 6px 0;
  background: linear-gradient(#2f7d2f 0, #5cb85a 3px, #3a9a3a 8px, #359335 18px, #236b23);
  font: italic 13px/20px var(--cjk);
}
.start svg { width: 15px; height: 15px; }
.quick { display: flex; gap: 3px; margin-left: 8px; width: 58px; }
.quick svg { width: 13px; height: 13px; }
.task {
  display: flex;
  align-items: center;
  gap: 2px;
  width: 110px;
  height: 20px;
  padding-left: 4px;
  margin-right: 2px;
  border-radius: 2px;
  background: linear-gradient(#5b97f7, #3c7ff0 5px, #3a79e8);
  font: 8px/12px "Liberation Mono", monospace;
  white-space: nowrap;
}
.task.on { background: #1c4cab; }
.task svg { width: 12px; height: 12px; flex: none; }
.ime { width: 11px; height: 12px; margin-left: auto; margin-right: 8px; }
.battery {
  width: 46px;
  height: 19px;
  border: solid #8a938c;
  border-width: 1px 5px 1px 1px;
  background: #7dfc3f;
  color: #111;
  font: bold 10px/17px "Liberation Mono", monospace;
  text-align: center;
}
.tray {
  display: flex;
  align-items: center;
  gap: 1px;
  width: 129px;
  height: 25px;
  margin-left: 16px;
  padding-left: 6px;
  border-left: 1px solid #0a3f9c;
  background: linear-gradient(#0d72c8 0, #1fb4f8 2px, #1294ea 7px, #1290e8 20px, #0d6db8);
}
.tray svg { width: 12px; height: 13px; flex: none; }
.tray time { margin-left: 1px; font: 8px/12px "Liberation Mono", monospace; }
```
